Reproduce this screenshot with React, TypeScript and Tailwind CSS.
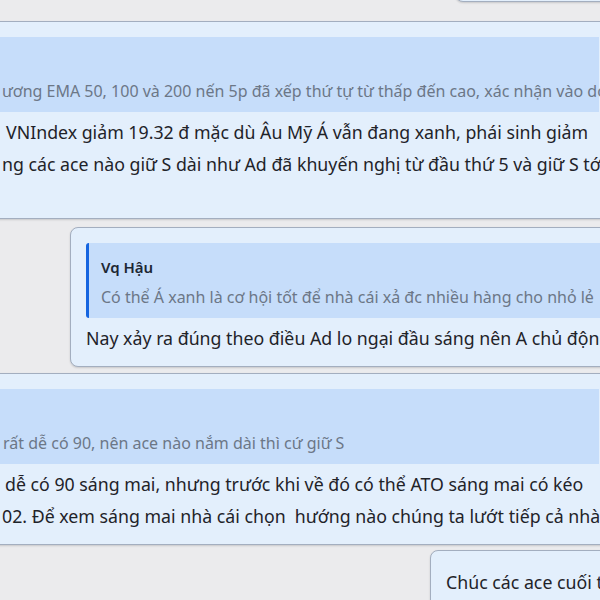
import React from 'react';

const font = "font-['Noto_Sans',_'Liberation_Sans',_sans-serif]";

export default function App() {
  return (
    <div className={`w-[600px] h-[600px] overflow-hidden bg-[#ebebed] flex flex-col ${font}`}>
      {/* tail of the previous bubble, only its bottom edge shows */}
      <div className="self-end -mt-[38px] -mr-[30px] w-[175px] h-[40px] shrink-0 rounded-[8px] border border-[#a3aebf] bg-[#e3effc] shadow-[0_1px_2px_rgba(0,0,0,0.15)]" />

      {/* bubble 1 */}
      <div className="mt-[19px] -mx-[40px] shrink-0 overflow-hidden rounded-[8px] border border-[#a3aebf] bg-[#e3effc] px-[40px] pt-[15px] pb-[38px] shadow-[0_1px_2px_rgba(0,0,0,0.15)]">
        <div className="-ml-[30px] h-[75px] bg-[#c6ddfa] pt-[13px] pb-[10px] pl-[31px] whitespace-nowrap">
          <div className="h-[22px]" />
          <div className="mt-[8px] text-[16px] leading-[22px] text-[#6c7787]">
            ương EMA 50, 100 và 200 nến 5p đã xếp thứ tự từ thấp đến cao, xác nhận vào downtrend
          </div>
        </div>
        <div className="mt-[4px] text-[17.75px] leading-[32px] text-[#1f2329] whitespace-nowrap">
          <div className="pl-[5px]">VNIndex giảm 19.32 đ mặc dù Âu Mỹ Á vẫn đang xanh, phái sinh giảm</div>
          <div className="pl-[1px]">ng các ace nào giữ S dài như Ad đã khuyến nghị từ đầu thứ 5 và giữ S tới giờ</div>
        </div>
      </div>

      {/* bubble 2 */}
      <div className="mt-[8px] ml-[70px] -mr-[40px] shrink-0 overflow-hidden rounded-[8px] border border-[#a3aebf] bg-[#e3effc] pl-[15px] pr-[15px] pt-[15px] pb-[12px] shadow-[0_1px_2px_rgba(0,0,0,0.15)]">
        <div className="h-[75px] rounded-[3px] border-l-[3px] border-[#1565e0] bg-[#c6ddfa] pt-[13px] pb-[10px] pl-[12px] whitespace-nowrap">
          <div className="text-[15px] leading-[22px] font-semibold text-[#1d2733]">Vq Hậu</div>
          <div className="mt-[8px] text-[16px] leading-[22px] text-[#6c7787]">
            Có thể Á xanh là cơ hội tốt để nhà cái xả đc nhiều hàng cho nhỏ lẻ
          </div>
        </div>
        <div className="mt-[4px] text-[17.75px] leading-[32px] text-[#1f2329] whitespace-nowrap">
          Nay xảy ra đúng theo điều Ad lo ngại đầu sáng nên A chủ động
        </div>
      </div>

      {/* bubble 3 */}
      <div className="mt-[6px] -mx-[40px] shrink-0 overflow-hidden rounded-[8px] border border-[#a3aebf] bg-[#e3effc] px-[40px] pt-[15px] pb-[12px] shadow-[0_1px_2px_rgba(0,0,0,0.15)]">
        <div className="-ml-[30px] h-[75px] bg-[#c6ddfa] pt-[13px] pb-[10px] pl-[32px] whitespace-nowrap">
          <div className="h-[22px]" />
          <div className="mt-[8px] text-[16px] leading-[22px] text-[#6c7787]">
            rất dễ có 90, nên ace nào nắm dài thì cứ giữ S
          </div>
        </div>
        <div className="mt-[4px] text-[17.75px] leading-[32px] text-[#1f2329] whitespace-nowrap">
          <div className="pl-[4px]">dễ có 90 sáng mai, nhưng trước khi về đó có thể ATO sáng mai có kéo</div>
          <div className="pl-[1px]">02. Để xem sáng mai nhà cái chọn&nbsp; hướng nào chúng ta lướt tiếp cả nhà nhé</div>
        </div>
      </div>

      {/* bubble 4 */}
      <div className="mt-[5px] ml-[430px] -mr-[40px] shrink-0 overflow-hidden rounded-[8px] border border-[#a3aebf] bg-[#e3effc] pl-[15px] pt-[15px] pb-[12px] shadow-[0_1px_2px_rgba(0,0,0,0.15)]">
        <div className="text-[17.75px] leading-[32px] text-[#1f2329] whitespace-nowrap">Chúc các ace cuối tuần vui vẻ</div>
      </div>
    </div>
  );
}
